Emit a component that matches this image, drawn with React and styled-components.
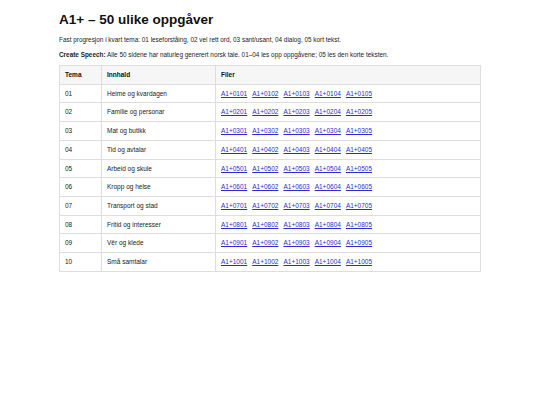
import React from "react"
import styled, { createGlobalStyle } from "styled-components"

const GlobalStyle = createGlobalStyle`
  html, body {
    margin: 0;
    padding: 0;
    background: #ffffff;
  }
  body {
    font-family: "Liberation Sans", Arial, sans-serif;
    color: #222222;
  }
`

const Page = styled.div`
  width: 422px;
  margin: 0 auto;
  padding-top: 12px;
`

const Title = styled.h1`
  font-size: 13.5px;
  line-height: 16px;
  font-weight: bold;
  margin: 0 0 8px 0;
  color: #111111;
`

const Lead = styled.p`
  font-size: 6.4px;
  line-height: 8px;
  margin: 0 0 6.5px 0;
`

const Strong = styled.strong`
  font-weight: bold;
`

const Table = styled.table`
  width: 100%;
  border-collapse: collapse;
  font-size: 6.5px;
  margin-top: 0;
`

const HeadCell = styled.th`
  background: #f6f6f6;
  font-weight: bold;
  text-align: left;
  border: 1px solid #dddddd;
  padding: 5px 5px;
  line-height: 7.7px;
  color: #111111;
  width: ${props => props.width || "auto"};
`

const Cell = styled.td`
  border: 1px solid #dddddd;
  padding: 5px 5px;
  line-height: 7.7px;
  text-align: left;
`

const FileCell = styled(Cell)`
  padding-left: 5px;
`

const FileLink = styled.a`
  color: #2c2cd0;
  text-decoration: underline;
  margin-right: 5px;
`

const topics = [
  "Heime og kvardagen",
  "Familie og personar",
  "Mat og butikk",
  "Tid og avtalar",
  "Arbeid og skule",
  "Kropp og helse",
  "Transport og stad",
  "Fritid og interesser",
  "Vêr og klede",
  "Små samtalar",
]

const Row = ({ num, name }) => (
  <tr>
    <Cell>{num}</Cell>
    <Cell>{name}</Cell>
    <FileCell>
      {[1, 2, 3, 4, 5].map(i => {
        const id = `A1+${num}0${i}`
        return (
          <FileLink href="#" key={id}>
            {id}
          </FileLink>
        )
      })}
    </FileCell>
  </tr>
)

export default function App() {
  return (
    <>
      <GlobalStyle />
      <Page>
        <Title>A1+ – 50 ulike oppgåver</Title>
        <Lead>
          Fast progresjon i kvart tema: 01 leseforståing, 02 vel rett ord, 03
          sant/usant, 04 dialog, 05 kort tekst.
        </Lead>
        <Lead>
          <Strong>Create Speech:</Strong> Alle 50 sidene har naturleg generert
          norsk tale. 01–04 les opp oppgåvene; 05 les den korte teksten.
        </Lead>
        <Table>
          <thead>
            <tr>
              <HeadCell width="31px">Tema</HeadCell>
              <HeadCell width="103px">Innhald</HeadCell>
              <HeadCell>Filer</HeadCell>
            </tr>
          </thead>
          <tbody>
            {topics.map((name, idx) => {
              const num = String(idx + 1).padStart(2, "0")
              return <Row key={num} num={num} name={name} />
            })}
          </tbody>
        </Table>
      </Page>
    </>
  )
}
